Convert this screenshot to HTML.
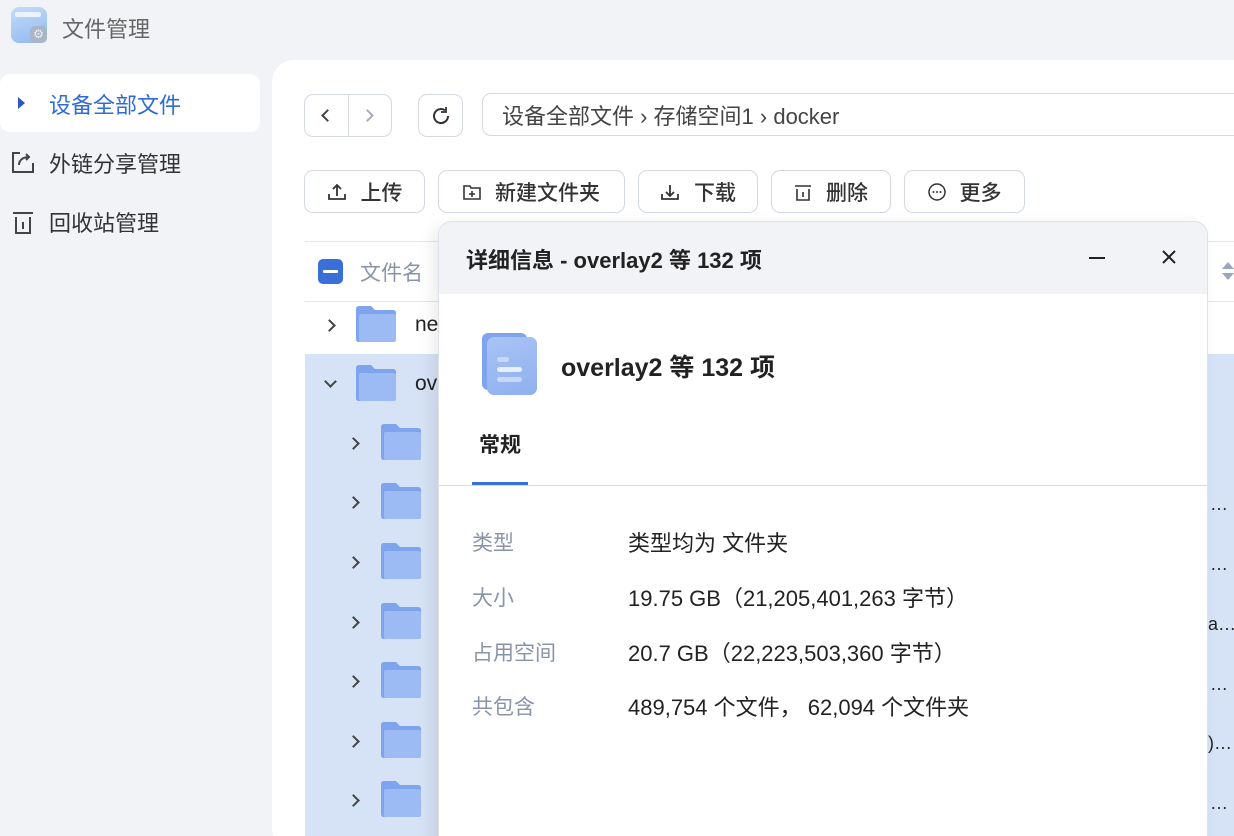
<!DOCTYPE html>
<html style="width:1234px;height:836px;overflow:hidden"><head><meta charset="utf-8"><style>
*{box-sizing:border-box;margin:0;padding:0}
body{width:1234px;height:836px;overflow:hidden;background:#f2f3f7;font-family:"Liberation Sans","Noto Sans CJK SC",sans-serif;position:relative;color:#222}
.a{position:absolute}
.btn{position:absolute;border:1px solid #d3d8e2;border-radius:9px;background:#fff;display:flex;align-items:center;justify-content:center;font-size:21px;color:#333;font-weight:500;gap:14px}
.side{position:absolute;left:49px;font-size:22px;color:#333}
.chev{position:absolute;width:9px;height:9px;border-right:2px solid #444;border-top:2px solid #444;transform:rotate(45deg)}
.lab{position:absolute;left:472px;font-size:21px;color:#8a94a8}
.val{position:absolute;left:628px;font-size:22px;color:#222}
</style></head><body>
<!-- logo -->
<div class="a" style="left:11px;top:7px;width:36px;height:36px;border-radius:8px;background:linear-gradient(160deg,#c4dcfa,#8fb8ef)"></div>
<div class="a" style="left:15px;top:12px;width:26px;height:5px;border-radius:2px;background:#eaf3ff"></div>
<div class="a" style="left:30px;top:26px;width:17px;height:17px;border-radius:5px;background:#a9b6c8;color:#eee;font-size:12px;line-height:17px;text-align:center">⚙</div>
<div class="a" style="left:62px;top:12px;font-size:22px;color:#666">文件管理</div>

<!-- sidebar -->
<div class="a" style="left:0;top:74px;width:260px;height:58px;background:#fff;border-radius:10px"></div>
<div class="a" style="left:18px;top:97px;width:0;height:0;border-left:7px solid #2a58c7;border-top:6px solid transparent;border-bottom:6px solid transparent"></div>
<div class="side" style="top:88px;color:#2f6bd8">设备全部文件</div>
<svg class="a" style="left:11px;top:150px" width="24" height="24" viewBox="0 0 24 24" fill="none" stroke="#444" stroke-width="2"><path d="M9 3H2v19h20v-9"/><path d="M8 15c0-5 4-8 10-8M15 4l3 3-3 3"/></svg>
<div class="side" style="top:147px">外链分享管理</div>
<svg class="a" style="left:12px;top:210px" width="22" height="24" viewBox="0 0 22 24" fill="none" stroke="#444" stroke-width="2"><path d="M1 3h20M4 7v16h14V7M11 12v7"/></svg>
<div class="side" style="top:206px">回收站管理</div>

<!-- main panel -->
<div class="a" style="left:272px;top:60px;width:1000px;height:790px;background:#fff;border-radius:22px"></div>

<div class="btn" style="left:304px;top:94px;width:88px;height:43px"></div>
<div class="a" style="left:348px;top:95px;width:1px;height:41px;background:#d3d8e2"></div>
<div class="chev" style="left:323px;top:111px;transform:rotate(-135deg)"></div>
<div class="chev" style="left:363px;top:111px;border-color:#aab"></div>
<div class="btn" style="left:418px;top:94px;width:45px;height:43px"><svg width="22" height="22" viewBox="0 0 22 22" fill="none" stroke="#333" stroke-width="2"><path d="M18 11a7 7 0 1 1-3-5.7"/><path d="M16 2v5h-5" stroke-width="1.8"/></svg></div>
<div class="btn" style="left:482px;top:93px;width:800px;height:43px;justify-content:flex-start;padding-left:19px;color:#444;font-weight:400;font-size:22px">设备全部文件 › 存储空间1 › docker</div>

<div class="btn" style="left:304px;top:170px;width:121px;height:43px"><svg width="20" height="18" viewBox="0 0 20 18" fill="none" stroke="#333" stroke-width="1.8"><path d="M2 11v5h16v-5M10 13V2M6 6l4-4 4 4"/></svg>上传</div>
<div class="btn" style="left:438px;top:170px;width:187px;height:43px"><svg width="18" height="16" viewBox="0 0 18 16" fill="none" stroke="#333" stroke-width="1.6"><path d="M1 2h6l1 2h9v11H1z M9 7v6M6 10h6"/></svg>新建文件夹</div>
<div class="btn" style="left:638px;top:170px;width:120px;height:43px"><svg width="20" height="18" viewBox="0 0 20 18" fill="none" stroke="#333" stroke-width="1.8"><path d="M2 11v5h16v-5M10 2v11M6 9l4 4 4-4"/></svg>下载</div>
<div class="btn" style="left:771px;top:170px;width:120px;height:43px"><svg width="18" height="18" viewBox="0 0 18 18" fill="none" stroke="#333" stroke-width="1.6"><path d="M1 3h16M3 6v11h12V6M9 9v5"/></svg>删除</div>
<div class="btn" style="left:904px;top:170px;width:121px;height:43px"><svg width="18" height="18" viewBox="0 0 18 18"><circle cx="9" cy="9" r="8" fill="none" stroke="#333" stroke-width="1.5"/><circle cx="5.5" cy="9" r="1" fill="#333"/><circle cx="9" cy="9" r="1" fill="#333"/><circle cx="12.5" cy="9" r="1" fill="#333"/></svg>更多</div>

<!-- table -->
<div class="a" style="left:305px;top:241px;width:940px;height:1px;background:#e3e7ee"></div>
<div class="a" style="left:318px;top:259px;width:25px;height:25px;border-radius:5px;background:#3a6fd8"></div>
<div class="a" style="left:323px;top:270px;width:15px;height:3px;background:#fff;border-radius:1px"></div>
<div class="a" style="left:360px;top:257px;font-size:21px;color:#8a94a8">文件名</div>
<div class="a" style="left:1222px;top:262px;border-bottom:7px solid #9aa6bf;border-left:6px solid transparent;border-right:6px solid transparent"></div>
<div class="a" style="left:1222px;top:273px;border-top:7px solid #9aa6bf;border-left:6px solid transparent;border-right:6px solid transparent"></div>
<div class="a" style="left:305px;top:301px;width:940px;height:1px;background:#e3e7ee"></div>
<div class="a" style="left:305px;top:354px;width:940px;height:490px;background:#d6e2f5"></div>

<div class="chev" style="left:325px;top:321px"></div>
<div class="chev" style="left:326px;top:377px;transform:rotate(135deg)"></div>
<div class="a" style="left:415px;top:313px;font-size:21px">ne</div>
<div class="a" style="left:415px;top:372px;font-size:21px">ov</div>

<svg width="0" height="0" style="position:absolute"><defs><g id="f"><path d="M0 3q0-3 3-3h12l4 4h18q3 0 3 3v26q0 3-3 3H3q-3 0-3-3z" fill="#7ea4ee"/><rect x="3" y="8" width="37" height="28" rx="2" fill="#9cbaf4"/></g></defs></svg>
<svg class="a" style="left:356px;top:306px" width="42" height="38"><use href="#f"/></svg>
<svg class="a" style="left:356px;top:365px" width="42" height="38"><use href="#f"/></svg>
<div class="chev" style="left:349px;top:439px"></div><svg class="a" style="left:381px;top:424px" width="42" height="38"><use href="#f"/></svg>
<div class="chev" style="left:349px;top:498px"></div><svg class="a" style="left:381px;top:483px" width="42" height="38"><use href="#f"/></svg>
<div class="chev" style="left:349px;top:558px"></div><svg class="a" style="left:381px;top:543px" width="42" height="38"><use href="#f"/></svg>
<div class="chev" style="left:349px;top:618px"></div><svg class="a" style="left:381px;top:603px" width="42" height="38"><use href="#f"/></svg>
<div class="chev" style="left:349px;top:677px"></div><svg class="a" style="left:381px;top:662px" width="42" height="38"><use href="#f"/></svg>
<div class="chev" style="left:349px;top:737px"></div><svg class="a" style="left:381px;top:722px" width="42" height="38"><use href="#f"/></svg>
<div class="chev" style="left:349px;top:796px"></div><svg class="a" style="left:381px;top:781px" width="42" height="38"><use href="#f"/></svg>

<div class="a" style="left:1210px;top:494px;font-size:18px">…</div>
<div class="a" style="left:1210px;top:554px;font-size:18px">…</div>
<div class="a" style="left:1208px;top:614px;font-size:18px">a…</div>
<div class="a" style="left:1210px;top:674px;font-size:18px">…</div>
<div class="a" style="left:1208px;top:733px;font-size:18px">)…</div>
<div class="a" style="left:1210px;top:793px;font-size:18px">…</div>

<!-- dialog -->
<div class="a" style="left:438px;top:221px;width:770px;height:640px;background:#fff;border-radius:14px;border:1px solid #dde1e8;box-shadow:-6px 4px 16px rgba(0,0,0,.08);overflow:hidden">
 <div style="height:72px;background:#f2f3f7"></div>
</div>
<div class="a" style="left:466px;top:243px;font-size:22px;font-weight:600;color:#222">详细信息 - overlay2 等 132 项</div>
<div class="a" style="left:1089px;top:257px;width:16px;height:2px;background:#222"></div>
<svg class="a" style="left:1162px;top:250px" width="14" height="14" viewBox="0 0 14 14" stroke="#222" stroke-width="2"><path d="M1 1l12 12M13 1L1 13"/></svg>

<div class="a" style="left:482px;top:333px;width:45px;height:57px;border-radius:6px;background:#7ea4ee"></div>
<div class="a" style="left:487px;top:337px;width:50px;height:58px;border-radius:7px;background:linear-gradient(160deg,#a9c3f5,#8fb0ef)"></div>
<div class="a" style="left:497px;top:357px;width:12px;height:5px;border-radius:3px;background:#c8d8f8"></div>
<div class="a" style="left:497px;top:367px;width:25px;height:5px;border-radius:3px;background:#e8f0ff"></div>
<div class="a" style="left:497px;top:377px;width:25px;height:5px;border-radius:3px;background:#c8d8f8"></div>
<div class="a" style="left:561px;top:348px;font-size:25px;font-weight:600;color:#222">overlay2 等 132 项</div>

<div class="a" style="left:479px;top:429px;font-size:21px;font-weight:600;color:#222">常规</div>
<div class="a" style="left:439px;top:485px;width:768px;height:1px;background:#d8dce3"></div>
<div class="a" style="left:472px;top:482px;width:56px;height:3px;background:#3a6fd8"></div>

<div class="lab" style="top:527px">类型</div><div class="val" style="top:526px">类型均为 文件夹</div>
<div class="lab" style="top:582px">大小</div><div class="val" style="top:581px">19.75 GB（21,205,401,263 字节）</div>
<div class="lab" style="top:637px">占用空间</div><div class="val" style="top:636px">20.7 GB（22,223,503,360 字节）</div>
<div class="lab" style="top:691px">共包含</div><div class="val" style="top:690px">489,754 个文件， 62,094 个文件夹</div>
</body></html>
